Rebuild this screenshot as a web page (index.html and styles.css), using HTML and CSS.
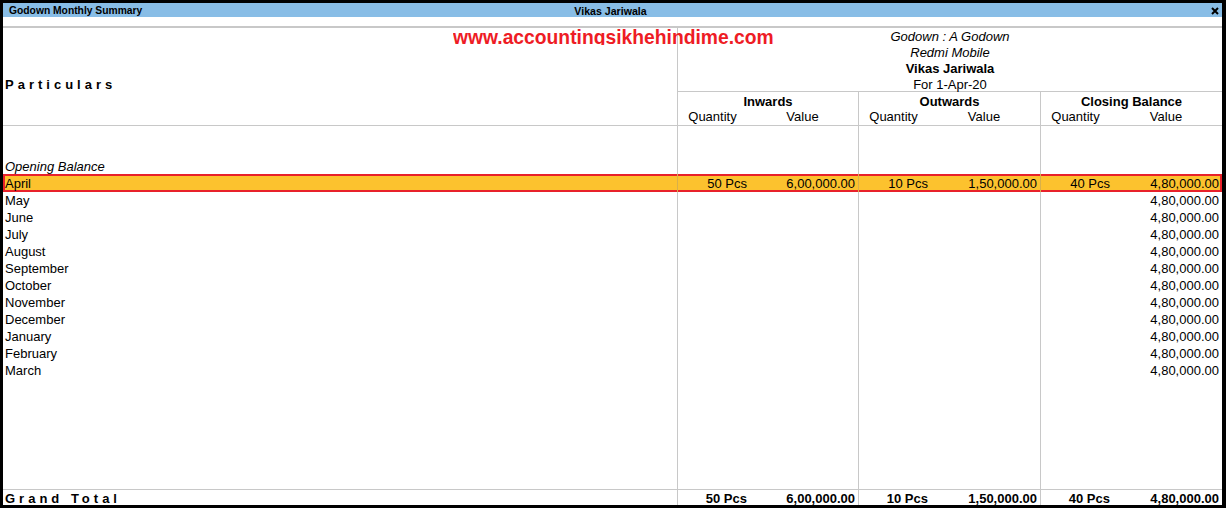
FILE: index.html
```html
<!DOCTYPE html>
<html>
<head>
<meta charset="utf-8">
<title>Godown Monthly Summary</title>
<link rel="stylesheet" href="styles.css">
</head>
<body>
<div class="window">
  <div class="titlebar">
    <div class="tb-left">Godown Monthly Summary</div>
    <div class="tb-center">Vikas Jariwala</div>
    <div class="tb-right">
      <svg class="close" width="8" height="8" viewBox="0 0 8 8"><path d="M1 1 L7 7 M7 1 L1 7" stroke="#000" stroke-width="2" fill="none"/></svg>
    </div>
  </div>
  <div class="gap"></div>
  <div class="rule"></div>
  <div class="watermark">www.accountingsikhehindime.com</div>
  <div class="report">
    <div class="head">
      <div class="head-left"><span class="particulars">Particulars</span></div>
      <div class="head-right">
        <div class="title-block">
          <div class="it">Godown : A Godown</div>
          <div class="it">Redmi Mobile</div>
          <div class="bd">Vikas Jariwala</div>
          <div>For 1-Apr-20</div>
        </div>
        <div class="colheads">
          <div class="colhead">
            <div class="ch-title">Inwards</div>
            <div class="ch-sub"><span class="qh">Quantity</span><span class="vh">Value</span></div>
          </div>
          <div class="colhead bl">
            <div class="ch-title">Outwards</div>
            <div class="ch-sub"><span class="qh">Quantity</span><span class="vh">Value</span></div>
          </div>
          <div class="colhead bl">
            <div class="ch-title">Closing Balance</div>
            <div class="ch-sub"><span class="qh">Quantity</span><span class="vh">Value</span></div>
          </div>
        </div>
      </div>
    </div>
    <div class="body">
      <div class="row spacer"><div class="c0"></div><div class="cn"></div><div class="cn"></div><div class="cn"></div></div>
      <div class="row nudge"><div class="c0 it">Opening Balance</div><div class="cn"></div><div class="cn"></div><div class="cn"></div></div>
      <div class="row hl nudge">
        <div class="c0">April</div>
        <div class="cn"><span class="q">50 Pcs</span><span class="v">6,00,000.00</span></div>
        <div class="cn"><span class="q">10 Pcs</span><span class="v">1,50,000.00</span></div>
        <div class="cn"><span class="q">40 Pcs</span><span class="v">4,80,000.00</span></div>
      </div>
      <div class="row"><div class="c0">May</div><div class="cn"></div><div class="cn"></div><div class="cn"><span class="q"></span><span class="v">4,80,000.00</span></div></div>
      <div class="row"><div class="c0">June</div><div class="cn"></div><div class="cn"></div><div class="cn"><span class="q"></span><span class="v">4,80,000.00</span></div></div>
      <div class="row"><div class="c0">July</div><div class="cn"></div><div class="cn"></div><div class="cn"><span class="q"></span><span class="v">4,80,000.00</span></div></div>
      <div class="row"><div class="c0">August</div><div class="cn"></div><div class="cn"></div><div class="cn"><span class="q"></span><span class="v">4,80,000.00</span></div></div>
      <div class="row"><div class="c0">September</div><div class="cn"></div><div class="cn"></div><div class="cn"><span class="q"></span><span class="v">4,80,000.00</span></div></div>
      <div class="row"><div class="c0">October</div><div class="cn"></div><div class="cn"></div><div class="cn"><span class="q"></span><span class="v">4,80,000.00</span></div></div>
      <div class="row"><div class="c0">November</div><div class="cn"></div><div class="cn"></div><div class="cn"><span class="q"></span><span class="v">4,80,000.00</span></div></div>
      <div class="row"><div class="c0">December</div><div class="cn"></div><div class="cn"></div><div class="cn"><span class="q"></span><span class="v">4,80,000.00</span></div></div>
      <div class="row"><div class="c0">January</div><div class="cn"></div><div class="cn"></div><div class="cn"><span class="q"></span><span class="v">4,80,000.00</span></div></div>
      <div class="row"><div class="c0">February</div><div class="cn"></div><div class="cn"></div><div class="cn"><span class="q"></span><span class="v">4,80,000.00</span></div></div>
      <div class="row"><div class="c0">March</div><div class="cn"></div><div class="cn"></div><div class="cn"><span class="q"></span><span class="v">4,80,000.00</span></div></div>
      <div class="row filler"><div class="c0"></div><div class="cn"></div><div class="cn"></div><div class="cn"></div></div>
      <div class="row total nudge">
        <div class="c0"><span class="gt">Grand Total</span></div>
        <div class="cn"><span class="q">50 Pcs</span><span class="v">6,00,000.00</span></div>
        <div class="cn"><span class="q">10 Pcs</span><span class="v">1,50,000.00</span></div>
        <div class="cn"><span class="q">40 Pcs</span><span class="v">4,80,000.00</span></div>
      </div>
    </div>
  </div>
</div>
</body>
</html>
```
FILE: styles.css
```css
html, body {
  margin: 0;
  padding: 0;
}
body {
  background: #000;
  width: 1226px;
  height: 508px;
  overflow: hidden;
  font-family: "Liberation Sans", Arial, sans-serif;
  font-size: 13px;
  color: #000;
}
.window {
  margin: 3px 4px 3px 3px;
  height: 502px;
  background: #fff;
  display: flex;
  flex-direction: column;
  position: relative;
  overflow: hidden;
}
.titlebar {
  height: 14px;
  background: #88bde6;
  display: grid;
  grid-template-columns: 1fr auto 1fr;
  align-items: start;
  font-size: 10.3px;
  font-weight: bold;
  line-height: 14px;
  overflow: hidden;
}
.tb-left {
  padding-left: 6px;
  padding-top: 1px;
}
.tb-center {
  text-align: center;
  font-size: 10.6px;
  padding-right: 4px;
  padding-top: 1px;
}
.tb-right {
  justify-self: end;
  display: flex;
  padding-right: 3px;
  padding-top: 4px;
}
.close {
  display: block;
}
.gap {
  height: 9px;
}
.rule {
  height: 2px;
  background: #c8c8c8;
}
.watermark {
  position: absolute;
  left: 450px;
  top: 25px;
  height: 17px;
  overflow: hidden;
  font-size: 19.3px;
  line-height: 19px;
  font-weight: bold;
  color: #ee1c25;
  white-space: nowrap;
}
.report {
  flex: 1;
  display: flex;
  flex-direction: column;
}
.head {
  display: grid;
  grid-template-columns: 674px 1fr;
  height: 98px;
  box-sizing: border-box;
  border-bottom: 1px solid #c8c8c8;
}
.head-left {
  padding-top: 49px;
  padding-left: 2px;
  line-height: 16px;
}
.particulars {
  font-weight: bold;
  letter-spacing: 4px;
}
.head-right {
  border-left: 1px solid #c8c8c8;
  display: flex;
  flex-direction: column;
}
.title-block {
  height: 64px;
  box-sizing: border-box;
  padding-top: 1px;
  border-bottom: 1px solid #c8c8c8;
  text-align: center;
  line-height: 16px;
}
.it {
  font-style: italic;
}
.bd {
  font-weight: bold;
}
.colheads {
  display: grid;
  grid-template-columns: 180px 182px 182px;
  flex: 1;
}
.bl {
  border-left: 1px solid #c8c8c8;
}
.colhead {
  line-height: 16px;
  padding-top: 2px;
  box-sizing: border-box;
}
.ch-title {
  text-align: center;
  font-weight: bold;
}
.ch-sub {
  display: grid;
  grid-template-columns: 69px 1fr;
  text-align: center;
  margin-top: -1px;
}
.body {
  flex: 1;
  display: flex;
  flex-direction: column;
}
.row {
  display: grid;
  grid-template-columns: 674px 181px 182px 182px;
  height: 17px;
  line-height: 17px;
}
.row > div {
  box-sizing: border-box;
  white-space: nowrap;
}
.nudge > div {
  padding-top: 1px;
}
.c0 {
  padding-left: 2px;
}
.cn {
  border-left: 1px solid #c8c8c8;
  display: grid;
  grid-template-columns: 69px 1fr;
}
.q {
  text-align: right;
}
.v {
  text-align: right;
  padding-right: 3px;
}
.spacer {
  height: 31px;
}
.hl {
  height: 18px;
  line-height: 18px;
  background: #fcc22e;
  box-shadow: inset 0 0 0 2px #e8212a;
}
.hl > .cn {
  border-left-color: #d8b04a;
}
.filler {
  flex: 1;
}
.total {
  height: 16px;
  line-height: 15px;
  font-weight: bold;
  border-top: 1px solid #c8c8c8;
  box-sizing: border-box;
}
.gt {
  letter-spacing: 4px;
}
```
